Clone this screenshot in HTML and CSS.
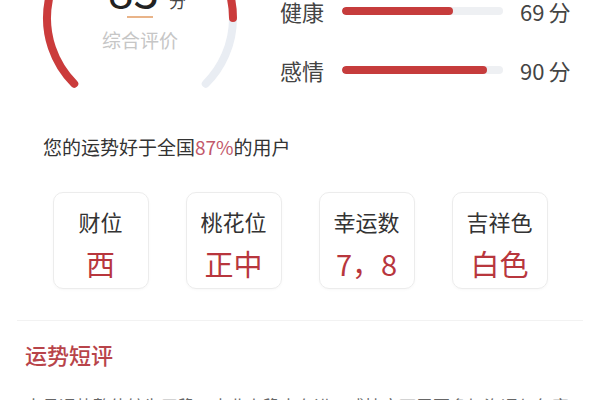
FILE: index.html
```html
<!DOCTYPE html>
<html lang="zh-CN">
<head>
    <meta charset="UTF-8">
    <meta name="viewport" content="width=device-width, initial-scale=1.0">
    <title>运势</title>
    <link rel="stylesheet" href="styles.css">
</head>
<body>
    <div class="top">
        <!-- overall score gauge -->
        <div class="gauge">
            <svg width="210" height="210" viewBox="0 0 210 210">
                <path class="track" d="M39.24 170.76 A93 93 0 1 1 170.76 170.76"/>
                <path class="fill" d="M39.24 170.76 A93 93 0 1 1 198 105"/>
            </svg>
            <div class="score">
                <div class="num">83<span>分</span></div>
                <div class="line"></div>
                <div class="caption">综合评价</div>
            </div>
        </div>

        <div class="bars">
            <div class="row">
                <span class="label">事业</span>
                <div class="bar"><div class="bar-fill" style="width:78%"></div></div>
                <span class="value">78<span>分</span></span>
            </div>
            <div class="row">
                <span class="label">财运</span>
                <div class="bar"><div class="bar-fill" style="width:85%"></div></div>
                <span class="value">85<span>分</span></span>
            </div>
            <div class="row">
                <span class="label">健康</span>
                <div class="bar"><div class="bar-fill" style="width:69%"></div></div>
                <span class="value">69<span>分</span></span>
            </div>
            <div class="row">
                <span class="label">感情</span>
                <div class="bar"><div class="bar-fill" style="width:90%"></div></div>
                <span class="value">90<span>分</span></span>
            </div>
        </div>
    </div>

    <p class="rank">您的运势好于全国<em>87%</em>的用户</p>

    <div class="cards">
        <div class="card">
            <div class="card-title">财位</div>
            <div class="card-value">西</div>
        </div>
        <div class="card">
            <div class="card-title">桃花位</div>
            <div class="card-value">正中</div>
        </div>
        <div class="card">
            <div class="card-title">幸运数</div>
            <div class="card-value">7，8</div>
        </div>
        <div class="card">
            <div class="card-title">吉祥色</div>
            <div class="card-value">白色</div>
        </div>
    </div>

    <div class="divider"></div>

    <h2 class="section-title">运势短评</h2>
    <p class="summary">本月运势整体较为平稳，事业上稳中有进，感情方面需要多加沟通与包容。</p>
</body>
</html>
```

FILE: styles.css
```css
body {
    margin: 0;
    background: #fff;
    font-family: "Noto Sans CJK SC", "Noto Sans", sans-serif;
    color: #333;
    overflow: hidden;
}

.top {
    display: flex;
    margin-top: -87px;
    height: 210px;
}

.gauge {
    position: relative;
    width: 210px;
    height: 210px;
    margin-left: 35px;
}

.gauge svg {
    display: block;
}

.gauge path {
    fill: none;
    stroke-width: 8;
    stroke-linecap: round;
}

.gauge .track {
    stroke: #e9edf3;
}

.gauge .fill {
    stroke: #cb3b3b;
}

.score {
    position: absolute;
    left: 0;
    right: 0;
    top: 52px;
    display: flex;
    flex-direction: column;
    align-items: center;
}

.score .num {
    display: flex;
    align-items: baseline;
    height: 46px;
    font-size: 46px;
    line-height: 46px;
    color: #222;
    padding-left: 14px;
}

.score .num span {
    font-size: 17px;
    line-height: 17px;
    color: #444;
    margin-left: 10px;
}

.score .line {
    width: 26px;
    height: 2px;
    background: #e9b489;
    margin-top: 5px;
}

.score .caption {
    font-size: 19px;
    line-height: 26px;
    color: #c6c6c6;
    margin-top: 9px;
}

.bars {
    margin-top: -50px;
    margin-left: 35px;
}

.row {
    display: flex;
    align-items: center;
    height: 59px;
}

.label {
    width: 45px;
    font-size: 22px;
    color: #444;
}

.bar {
    width: 161px;
    height: 8px;
    border-radius: 4px;
    background: #eef0f3;
    margin-left: 17px;
    overflow: hidden;
}

.bar-fill {
    height: 100%;
    border-radius: 4px;
    background: #c63c3c;
}

.value {
    margin-left: 17px;
    font-size: 22px;
    color: #444;
}

.value span {
    margin-left: 4px;
}

.rank {
    margin: 11px 0 0 43px;
    font-size: 19px;
    line-height: 26px;
    color: #333;
}

.rank em {
    font-style: normal;
    color: #c2586a;
}

.cards {
    display: flex;
    justify-content: center;
    gap: 37px;
    margin-top: 32px;
}

.card {
    box-sizing: border-box;
    width: 96px;
    height: 97px;
    border: 1px solid #ececec;
    border-radius: 10px;
    padding-top: 14px;
    text-align: center;
    box-shadow: 0 1px 3px rgba(0, 0, 0, 0.03);
}

.card-title {
    font-size: 22px;
    line-height: 28px;
    color: #333;
}

.card-value {
    margin-top: 10px;
    font-size: 29px;
    line-height: 36px;
    color: #b8363d;
}

.divider {
    height: 1px;
    background: #f2f2f2;
    margin: 31px 17px 0;
}

.section-title {
    margin: 19px 0 0 25px;
    font-size: 22px;
    line-height: 28px;
    font-weight: 500;
    color: #b8444a;
}

.summary {
    margin: 25px 0 0 25px;
    font-size: 17px;
    line-height: 26px;
    color: #666;
    white-space: nowrap;
}
```
